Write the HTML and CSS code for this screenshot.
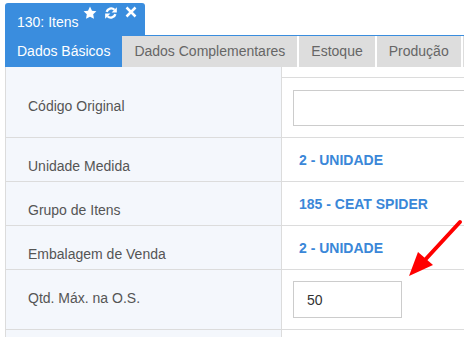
FILE: index.html
```html
<!DOCTYPE html>
<html>
  <head>
    <meta charset="utf-8">
    <title>130: Itens</title>
    <link rel="stylesheet" href="styles.css">
  </head>
  <body>
    <div class="page">
      <div class="window-tab">
        <span class="window-title">130: Itens</span>
        <span class="window-icons">
          <svg width="14" height="14" viewBox="0 0 24 24"><path fill="#fff" d="M12 1l3.4 7 7.6 1-5.5 5.3 1.3 7.7L12 18.4 5.2 22l1.3-7.7L1 9l7.6-1z"/></svg>
          <svg width="14" height="14" viewBox="0 0 24 24"><path fill="none" stroke="#fff" stroke-width="4" d="M4.5 10A8 8 0 0 1 18 6.5M19.5 14A8 8 0 0 1 6 17.5"/><path fill="#fff" d="M22 2v9h-9zM2 22v-9h9z"/></svg>
          <svg width="12" height="12" viewBox="0 0 24 24"><path stroke="#fff" stroke-width="5" d="M3 3l18 18M21 3L3 21"/></svg>
        </span>
      </div>
      <div class="tabbar">
        <div class="tab active">Dados Básicos</div>
        <div class="tab">Dados Complementares</div>
        <div class="tab">Estoque</div>
        <div class="tab">Produção</div>
        <div class="tab more"></div>
      </div>
      <div class="form">
        <div class="row short">
          <div class="label"></div>
          <div class="field"></div>
        </div>
        <div class="row tall">
          <div class="label">Código Original</div>
          <div class="field"><input type="text" class="input wide" value=""></div>
        </div>
        <div class="row">
          <div class="label">Unidade Medida</div>
          <div class="field"><span class="value">2 - UNIDADE</span></div>
        </div>
        <div class="row">
          <div class="label">Grupo de Itens</div>
          <div class="field"><span class="value">185 - CEAT SPIDER</span></div>
        </div>
        <div class="row">
          <div class="label">Embalagem de Venda</div>
          <div class="field"><span class="value">2 - UNIDADE</span></div>
        </div>
        <div class="row tall">
          <div class="label">Qtd. Máx. na O.S.</div>
          <div class="field"><input type="text" class="input" value="50"></div>
        </div>
        <div class="row end">
          <div class="label"></div>
          <div class="field"></div>
        </div>
      </div>
      <svg class="arrow" width="70" height="70" viewBox="0 0 70 70">
        <path d="M66 5L30 44" stroke="#f00" stroke-width="4" stroke-linecap="round"/>
        <path d="M15 59L24 35L39 48z" fill="#f00"/>
      </svg>
    </div>
  </body>
</html>
```

FILE: styles.css
```css
body {
  margin: 0;
  font-family: "Liberation Sans", Arial, sans-serif;
  background: #fff;
}
.page {
  position: relative;
  height: 337px;
  overflow: hidden;
}
.window-tab {
  display: flex;
  justify-content: space-between;
  margin: 3px 0 0 5px;
  width: 140px;
  height: 32px;
  box-sizing: border-box;
  padding: 0 8px 0 12px;
  background: #3a8dde;
  border-radius: 3px 3px 0 0;
  color: #fff;
}
.window-title {
  font-size: 14px;
  margin-top: 11px;
}
.window-icons {
  display: flex;
  gap: 7px;
  margin-top: 3px;
  align-items: flex-start;
}
.tabbar {
  display: flex;
  margin-left: 5px;
  border-top: 1px solid #3a8dde;
  height: 31px;
  white-space: nowrap;
  overflow: hidden;
}
.tab {
  padding: 0 12px;
  line-height: 31px;
  font-size: 14px;
  color: #666;
  background: #dddddd;
  margin-right: 2px;
}
.tab.active {
  background: #3a8dde;
  color: #fff;
  margin-right: 0;
}
.tab.more {
  flex: 1;
  margin-right: 0;
}
.form {
  margin-left: 5px;
  border-left: 1px solid #dcdcdc;
}
.row {
  display: flex;
  height: 43px;
  border-bottom: 1px solid #dcdcdc;
}
.row.short {
  height: 10px;
}
.row.tall {
  height: 59px;
}
.row.end {
  border-bottom: 0;
}
.label {
  width: 276px;
  flex: none;
  box-sizing: border-box;
  background: #f4f7fc;
  border-right: 1px solid #dcdcdc;
  padding: 19px 0 0 22px;
  font-size: 14px;
  line-height: 18px;
  color: #555;
}
.field {
  flex: 1;
  padding-left: 11px;
  min-width: 0;
}
.value {
  display: block;
  padding: 14px 0 0 6px;
  font-size: 14px;
  line-height: 16px;
  font-weight: bold;
  color: #3a87d8;
}
.input {
  display: block;
  margin-top: 11px;
  width: 109px;
  height: 37px;
  box-sizing: border-box;
  border: 1px solid #cccccc;
  padding: 0 13px;
  font-family: "Liberation Sans", Arial, sans-serif;
  font-size: 14px;
  color: #333;
  outline: none;
}
.input.wide {
  width: 200px;
  height: 36px;
  margin-top: 12px;
}
.arrow {
  position: absolute;
  left: 394px;
  top: 217px;
}
```
